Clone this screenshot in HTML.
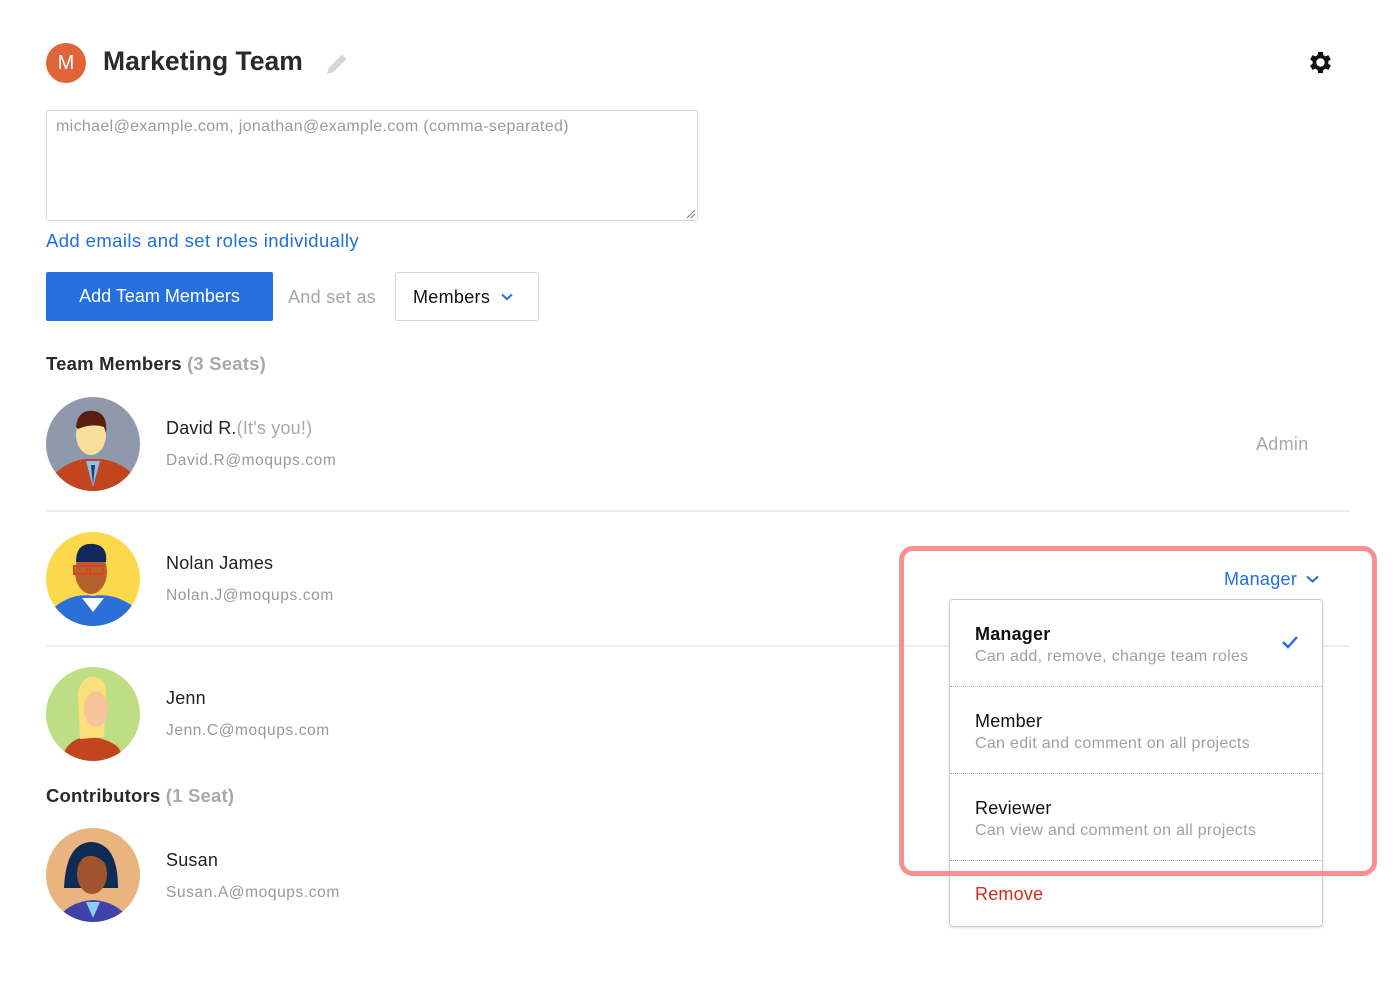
<!DOCTYPE html>
<html><head><meta charset="utf-8"><style>
*{margin:0;padding:0;box-sizing:border-box}
body{width:1396px;height:1000px;background:#fff;font-family:"Liberation Sans",sans-serif;position:relative;overflow:hidden;color:#222}
.a{position:absolute;white-space:nowrap}
.nm{font-size:18px;color:#222;letter-spacing:.2px}
.em{font-size:15.5px;color:#999;letter-spacing:.6px}
.hr{position:absolute;left:46px;width:1304px;height:2px;background:#eeeeee}
.av{position:absolute;left:46px;width:94px;height:94px;border-radius:50%;overflow:hidden}
.it{position:absolute;left:0;width:372px;height:87px;border-bottom:1px dotted #aaa}
.it b,.it span{position:absolute;left:25px}
.sub{font-size:16px;color:#a0a0a0;letter-spacing:.3px}
</style></head><body>
<div class="a" style="left:46px;top:43px;width:40px;height:40px;border-radius:50%;background:#e0643a;color:#fff;font-size:20px;text-align:center;line-height:40px">M</div>
<div class="a" style="left:103px;top:46px;font-size:26.5px;font-weight:bold;color:#2a2a2a">Marketing Team</div>
<svg class="a" style="left:323px;top:50px" width="28" height="28" viewBox="0 0 28 28"><path d="M4 24 L5.5 18 L19 4.5 L23.5 9 L10 22.5 Z" fill="#d6d6d6"/></svg>
<svg class="a" style="left:1306px;top:48px" width="29" height="29" viewBox="0 0 24 24"><path fill="#111" d="M19.4 13a7.5 7.5 0 0 0 0-2l2.1-1.6-2-3.5-2.5 1a7.3 7.3 0 0 0-1.7-1L15 3.2h-4l-.4 2.7a7.3 7.3 0 0 0-1.7 1l-2.5-1-2 3.5L6.5 11a7.5 7.5 0 0 0 0 2l-2.1 1.6 2 3.5 2.5-1a7.3 7.3 0 0 0 1.7 1l.4 2.7h4l.4-2.7a7.3 7.3 0 0 0 1.7-1l2.5 1 2-3.5zM13 15.5a3.5 3.5 0 1 1 0-7 3.5 3.5 0 0 1 0 7z" transform="translate(-1 0)"/></svg>
<div class="a" style="left:46px;top:110px;width:652px;height:111px;border:1px solid #d9d9d9;border-radius:3px"></div>
<div class="a" style="left:56px;top:118px;font-size:16px;color:#9a9a9a;letter-spacing:.35px">michael@example.com, jonathan@example.com (comma-separated)</div>
<svg class="a" style="left:686px;top:209px" width="10" height="10"><path d="M1 9L9 1M5 9L9 5" stroke="#777" stroke-width="1"/></svg>
<div class="a" style="left:46px;top:230px;font-size:18.5px;color:#1f6fe0;letter-spacing:.4px">Add emails and set roles individually</div>
<div class="a" style="left:46px;top:272px;width:227px;height:49px;background:#2570de;border-radius:2px;color:#fff;font-size:18px;text-align:center;line-height:49px">Add Team Members</div>
<div class="a" style="left:288px;top:287px;font-size:18px;color:#a6a6a6;letter-spacing:.3px">And set as</div>
<div class="a" style="left:395px;top:272px;width:144px;height:49px;border:1px solid #d6d6d6;border-radius:3px"></div>
<div class="a" style="left:413px;top:287px;font-size:18px;color:#111;letter-spacing:.3px">Members</div>
<svg class="a" style="left:501px;top:293px" width="12" height="8"><path d="M1 1.5L6 6L11 1.5" stroke="#1f6fe0" stroke-width="2" fill="none"/></svg>
<div class="a" style="left:46px;top:353px;font-size:18.5px;font-weight:bold;color:#2a2a2a;letter-spacing:.2px">Team Members <span style="color:#a8a8a8">(3 Seats)</span></div>

<div class="av" style="top:397px;background:#8e9aab"><svg width="94" height="94"><path d="M5 80 Q25 60 47 62 Q70 60 90 80 L90 94 L5 94Z" fill="#c2451f"/><path d="M40 64 L47 90 L54 64Z" fill="#8cc0e6"/><path d="M45 68 L47 88 L49 68Z" fill="#1d3b72"/><ellipse cx="45" cy="38" rx="15" ry="20" fill="#f8df9c"/><path d="M30 30 Q32 12 48 14 Q62 16 60 36 L58 30 Q46 26 32 32Z" fill="#5a1f10"/></svg></div>
<div class="a nm" style="left:166px;top:418px">David R.<span style="color:#a8a8a8">(It's you!)</span></div>
<div class="a em" style="left:166px;top:452px">David.R@moqups.com</div>
<div class="a" style="left:1256px;top:434px;font-size:18px;color:#a8a8a8;letter-spacing:.3px">Admin</div>
<div class="hr" style="top:510px"></div>

<div class="av" style="top:532px;background:#fbd94a"><svg width="94" height="94"><path d="M5 78 Q25 60 47 64 Q70 60 92 78 L92 94 L5 94Z" fill="#2c6fd9"/><path d="M36 66 L47 80 L58 66Z" fill="#fff"/><ellipse cx="45" cy="40" rx="16" ry="22" fill="#b4612f"/><path d="M30 30 Q30 10 48 12 Q62 14 60 30 Z" fill="#10295a"/><rect x="28" y="34" width="13" height="8" fill="none" stroke="#d6451f" stroke-width="2"/><rect x="44" y="34" width="13" height="8" fill="none" stroke="#d6451f" stroke-width="2"/></svg></div>
<div class="a nm" style="left:166px;top:553px">Nolan James</div>
<div class="a em" style="left:166px;top:587px">Nolan.J@moqups.com</div>
<div class="hr" style="top:645px"></div>

<div class="av" style="top:667px;background:#bede85"><svg width="94" height="94"><path d="M15 94 Q20 72 40 70 Q60 70 72 80 L80 94Z" fill="#c2451f"/><path d="M32 28 Q34 8 50 10 Q62 14 60 30 L58 70 L34 72Z" fill="#fae07a"/><ellipse cx="50" cy="42" rx="12" ry="18" fill="#f6c39b"/></svg></div>
<div class="a nm" style="left:166px;top:688px">Jenn</div>
<div class="a em" style="left:166px;top:722px">Jenn.C@moqups.com</div>

<div class="a" style="left:46px;top:785px;font-size:18.5px;font-weight:bold;color:#2a2a2a;letter-spacing:.2px">Contributors <span style="color:#a8a8a8">(1 Seat)</span></div>
<div class="av" style="top:828px;background:#e9b47f"><svg width="94" height="94"><path d="M10 94 Q20 74 47 72 Q74 74 84 94Z" fill="#3f42a8"/><path d="M40 74 L47 90 L54 74Z" fill="#8fcaf0"/><path d="M18 60 Q20 14 46 14 Q72 16 72 60 Z" fill="#0e2b55"/><ellipse cx="46" cy="46" rx="15" ry="20" fill="#a0532c"/><path d="M32 34 Q46 20 62 38 L62 24 L34 24Z" fill="#0e2b55"/></svg></div>
<div class="a nm" style="left:166px;top:850px">Susan</div>
<div class="a em" style="left:166px;top:884px">Susan.A@moqups.com</div>

<div class="a" style="left:1224px;top:569px;font-size:18px;color:#1f6fe0;letter-spacing:.3px">Manager</div>
<svg class="a" style="left:1306px;top:575px" width="13" height="9"><path d="M1 1.5L6.5 6.5L12 1.5" stroke="#1f6fe0" stroke-width="2" fill="none"/></svg>

<div class="a" style="left:949px;top:599px;width:374px;height:328px;border:1px solid #cfcfcf;border-radius:4px;background:#fff;box-shadow:0 1px 3px rgba(0,0,0,.12)">
 <div class="it" style="top:0"><b style="top:24px;font-size:18px;color:#111;letter-spacing:.2px">Manager</b><span class="sub" style="top:48px">Can add, remove, change team roles</span>
 <svg style="position:absolute;left:331px;top:35px" width="18" height="14"><path d="M2 7L7 12L16 2" stroke="#1f6fe0" stroke-width="2.4" fill="none"/></svg></div>
 <div class="it" style="top:87px"><span style="top:24px;font-size:18px;color:#111;letter-spacing:.2px">Member</span><span class="sub" style="top:48px">Can edit and comment on all projects</span></div>
 <div class="it" style="top:174px"><span style="top:24px;font-size:18px;color:#111;letter-spacing:.2px">Reviewer</span><span class="sub" style="top:48px">Can view and comment on all projects</span></div>
 <div class="a" style="left:25px;top:284px;font-size:18px;color:#d42a1c;letter-spacing:.2px">Remove</div>
</div>
<div class="a" style="left:899px;top:546px;width:478px;height:330px;border:5px solid #f98e93;border-radius:14px"></div>
</body></html>
